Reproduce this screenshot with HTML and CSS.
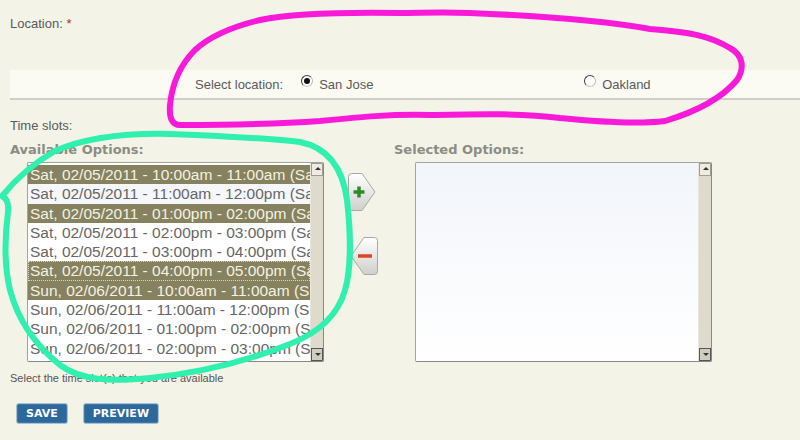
FILE: index.html
```html
<!DOCTYPE html>
<html lang="en">
<head>
    <meta charset="UTF-8">
    <title>Time slots</title>
    <link rel="stylesheet" href="styles.css">
</head>
<body>
    <div class="field-label">Location: <span class="required">*</span></div>

    <div class="location-band">
        <span class="band-label">Select location:</span>
        <label class="radio-option first"><span class="radio checked"></span>San Jose</label>
        <label class="radio-option"><span class="radio"></span>Oakland</label>
    </div>

    <div class="field-label slots-label">Time slots:</div>

    <div class="picker">
        <div class="picker-col">
            <div class="picker-title">Available Options:</div>
            <div class="listbox">
                <ul class="options">
                    <li class="sel">Sat, 02/05/2011 - 10:00am - 11:00am (Saturday)</li>
                    <li>Sat, 02/05/2011 - 11:00am - 12:00pm (Saturday)</li>
                    <li class="sel">Sat, 02/05/2011 - 01:00pm - 02:00pm (Saturday)</li>
                    <li>Sat, 02/05/2011 - 02:00pm - 03:00pm (Saturday)</li>
                    <li>Sat, 02/05/2011 - 03:00pm - 04:00pm (Saturday)</li>
                    <li class="sel focus">Sat, 02/05/2011 - 04:00pm - 05:00pm (Saturday)</li>
                    <li class="sel">Sun, 02/06/2011 - 10:00am - 11:00am (Sunday)</li>
                    <li>Sun, 02/06/2011 - 11:00am - 12:00pm (Sunday)</li>
                    <li>Sun, 02/06/2011 - 01:00pm - 02:00pm (Sunday)</li>
                    <li>Sun, 02/06/2011 - 02:00pm - 03:00pm (Sunday)</li>
                </ul>
                <div class="scrollbar">
                    <span class="arrow up"></span>
                    <span class="track"></span>
                    <span class="arrow down"></span>
                </div>
            </div>
        </div>

        <div class="move-buttons">
            <button class="move add" title="Add">
                <svg width="28" height="38" viewBox="0 0 28 38">
                    <defs>
                        <linearGradient id="gAdd" x1="0" y1="0" x2="0" y2="1">
                            <stop offset="0" stop-color="#ffffff"/>
                            <stop offset="1" stop-color="#cfcfcc"/>
                        </linearGradient>
                    </defs>
                    <path d="M3.5 0.5 H14 L27 19 L14 37.5 H3.5 Q0.5 37.5 0.5 34.5 V3.5 Q0.5 0.5 3.5 0.5 Z" fill="url(#gAdd)" stroke="#a9a9a4"/>
                    <path d="M11 13.5 V24.5 M5.5 19 H16.5" stroke="#2f8a2a" stroke-width="3.5"/>
                </svg>
            </button>
            <button class="move remove" title="Remove">
                <svg width="28" height="38" viewBox="0 0 28 38">
                    <defs>
                        <linearGradient id="gRem" x1="0" y1="0" x2="0" y2="1">
                            <stop offset="0" stop-color="#ffffff"/>
                            <stop offset="1" stop-color="#cfcfcc"/>
                        </linearGradient>
                    </defs>
                    <path d="M24.5 0.5 H14 L1 19 L14 37.5 H24.5 Q27.5 37.5 27.5 34.5 V3.5 Q27.5 0.5 24.5 0.5 Z" fill="url(#gRem)" stroke="#a9a9a4"/>
                    <path d="M8 19 H22" stroke="#e0451e" stroke-width="3.5"/>
                </svg>
            </button>
        </div>

        <div class="picker-col selected-col">
            <div class="picker-title">Selected Options:</div>
            <div class="listbox empty">
                <ul class="options"></ul>
                <div class="scrollbar">
                    <span class="arrow up"></span>
                    <span class="track"></span>
                    <span class="arrow down"></span>
                </div>
            </div>
        </div>
    </div>

    <div class="hint">Select the time slot(s) that you are available</div>

    <div class="actions">
        <button class="btn">SAVE</button>
        <button class="btn">PREVIEW</button>
    </div>

    <!-- hand-drawn marks on top of the form -->
    <svg class="marks" width="800" height="440" viewBox="0 0 800 440">
        <path d="M400 13 C340 12 290 14 260 20 C235 26 210 36 195 50 C180 65 172 85 170 105 C169 118 172 125 180 125 C230 125 280 124 320 121 C360 117 390 114 430 115 C480 114 520 113 560 118 C600 122 640 124 665 121 C695 112 722 98 737 80 C745 68 743 55 730 48 C710 36 690 32 650 29 C600 20 520 15 470 13 C440 12 420 13 400 13"
              fill="none" stroke="#f81ad8" stroke-width="6" stroke-linecap="round" stroke-linejoin="round"/>
        <path d="M2 196 C15 180 32 164 55 151 C85 138 125 133 170 134 C220 136 270 138 300 142 C330 148 343 170 347 200 C351 235 351 270 345 290 C338 315 318 333 290 344 C250 360 200 373 150 378 C110 382 80 380 60 365 C35 345 18 320 10 290 C4 265 5 235 8 212 C9 203 6 198 2 196"
              fill="none" stroke="#2ff0ae" stroke-width="6" stroke-linecap="round" stroke-linejoin="round"/>
    </svg>
</body>
</html>
```

FILE: styles.css
```css
body {
    margin: 0;
    padding: 16px 0 0 10px;
    background-color: #f3f3e8;
    font-family: "Liberation Sans", Arial, sans-serif;
    font-size: 13px;
    color: #5a5a5a;
    position: relative;
    width: 790px;
    height: 424px;
    overflow: hidden;
}
.field-label {
    line-height: 16px;
}
.required {
    color: #b0302a;
}
.location-band {
    margin-top: 38px;
    height: 28px;
    background-color: #fbfbf4;
    border-bottom: 2px solid #cfcfc8;
    display: flex;
    align-items: center;
    padding-left: 185px;
    white-space: nowrap;
}
.band-label {
    margin-right: 18px;
    flex-shrink: 0;
}
.radio-option {
    display: flex;
    align-items: center;
    gap: 6px;
}
.radio-option.first {
    width: 283px;
    flex-shrink: 0;
}
.radio {
    width: 10px;
    height: 10px;
    border-radius: 50%;
    border: 1px solid #3a3a3a;
    border-right-color: #bbb;
    border-bottom-color: #ccc;
    background: #fff;
    position: relative;
    top: -3px;
}
.radio.checked::after {
    content: "";
    position: absolute;
    left: 2px;
    top: 2px;
    width: 6px;
    height: 6px;
    border-radius: 50%;
    background: #111;
}
.slots-label {
    margin-top: 18px;
}
.picker {
    margin-top: 8px;
    display: flex;
}
.picker-title {
    font-family: "DejaVu Sans", Verdana, sans-serif;
    font-weight: bold;
    font-size: 13px;
    line-height: 16px;
    color: #8c8c84;
}
.listbox {
    margin: 4px 0 0 17px;
    width: 295px;
    height: 198px;
    border: 1px solid #a3a3a0;
    border-right-color: #888;
    border-bottom-color: #888;
    border-radius: 2px;
    background: #fff;
    display: flex;
    overflow: hidden;
}
.options {
    list-style: none;
    margin: 0;
    padding: 2px 0 0 0;
    flex: 1;
    overflow: hidden;
    font-size: 15.5px;
    color: #666;
}
.options li {
    height: 19.3px;
    line-height: 19.3px;
    padding-left: 2px;
    white-space: nowrap;
    overflow: hidden;
}
.options li:nth-child(2) {
    background: #f5f7fb;
}
.options li.sel {
    background: #86815f;
    color: #f4f2e2;
}
.options li.focus {
    outline: 1px dotted #d8d6c0;
    outline-offset: -1px;
}
.scrollbar {
    width: 12px;
    display: flex;
    flex-direction: column;
    background: #dedbcd;
    border-left: 1px solid #e8e6da;
}
.track {
    flex: 1;
}
.arrow {
    height: 11px;
    background: #eeece2;
    border: 1px solid #9e9d90;
    position: relative;
}
.arrow::after {
    content: "";
    position: absolute;
    left: 3px;
    border-left: 3px solid transparent;
    border-right: 3px solid transparent;
}
.arrow.up::after {
    top: 3px;
    border-bottom: 3px solid #333;
}
.arrow.down {
    background: #cfcdbf;
    border-color: #555;
}
.arrow.down::after {
    top: 4px;
    border-top: 3px solid #333;
}
.move-buttons {
    margin: 31px 0 0 24px;
    display: flex;
    flex-direction: column;
    gap: 26px;
    width: 28px;
}
.move {
    padding: 0;
    border: none;
    background: none;
    width: 28px;
    height: 38px;
    display: block;
}
.move.remove {
    margin-left: 2px;
}
.selected-col {
    margin-left: 18px;
}
.listbox.empty {
    margin-left: 21px;
}
.listbox.empty .options {
    background: linear-gradient(#f2f5fa, #ffffff);
}
.hint {
    margin-top: 9px;
    font-size: 11px;
    line-height: 14px;
    color: #555;
}
.actions {
    margin: 18px 0 0 6px;
    display: flex;
    gap: 15px;
}
.btn {
    height: 21px;
    padding: 0 9px;
    border: 1px solid #a8c0d2;
    border-radius: 3px;
    background: #2d689b;
    box-shadow: inset 0 0 0 1px #3a77aa;
    color: #fff;
    font-family: "DejaVu Sans", Verdana, sans-serif;
    font-weight: bold;
    font-size: 11px;
}
.marks {
    position: absolute;
    left: 0;
    top: 0;
    pointer-events: none;
}
```
